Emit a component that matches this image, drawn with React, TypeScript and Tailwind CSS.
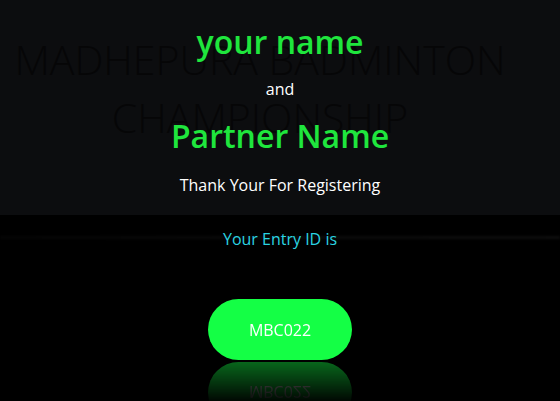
export default function App() {
  return (
    <div
      className="relative w-[560px] h-[401px] overflow-hidden bg-black"
      style={{ fontFamily: '"Open Sans", "Noto Sans", sans-serif' }}
    >
      {/* top band with faded title */}
      <div className="absolute inset-x-0 top-0 h-[215px] bg-[#0c0d0f]">
        <div className="pt-[30px] pr-[40px] text-center text-[41px] font-light leading-[58px] text-[#060607] uppercase">
          Madhepura Badminton
          <br />
          Championship
        </div>
      </div>
      <div className="absolute inset-x-0 top-[236px] h-[3px] bg-gradient-to-r from-[#050505] via-[#0a0a0a] to-[#0d0d0d] blur-[1px]" />

      <div className="relative flex flex-col items-center">
        <h1 className="mt-[20px] text-[32px] font-semibold leading-[44px] text-[#1fe63d]">your name</h1>
        <p className="mt-[14px] text-[16px] leading-[22px] text-white">and</p>
        <h2 className="mt-[14px] text-[32px] font-semibold leading-[44px] text-[#1fe63d]">Partner Name</h2>
        <p className="mt-[16px] text-[16px] leading-[22px] text-white">Thank Your For Registering</p>
        <p className="mt-[32px] text-[16px] leading-[22px] text-[#2ad4e2]">Your Entry ID is</p>
        <div className="mt-[49px] flex h-[61px] w-[144px] items-center justify-center rounded-full bg-[#14ff45] text-[16px] text-white [-webkit-box-reflect:below_2px_linear-gradient(transparent_30%,rgba(0,0,0,0.4))]">
          MBC022
        </div>
      </div>
    </div>
  );
}
